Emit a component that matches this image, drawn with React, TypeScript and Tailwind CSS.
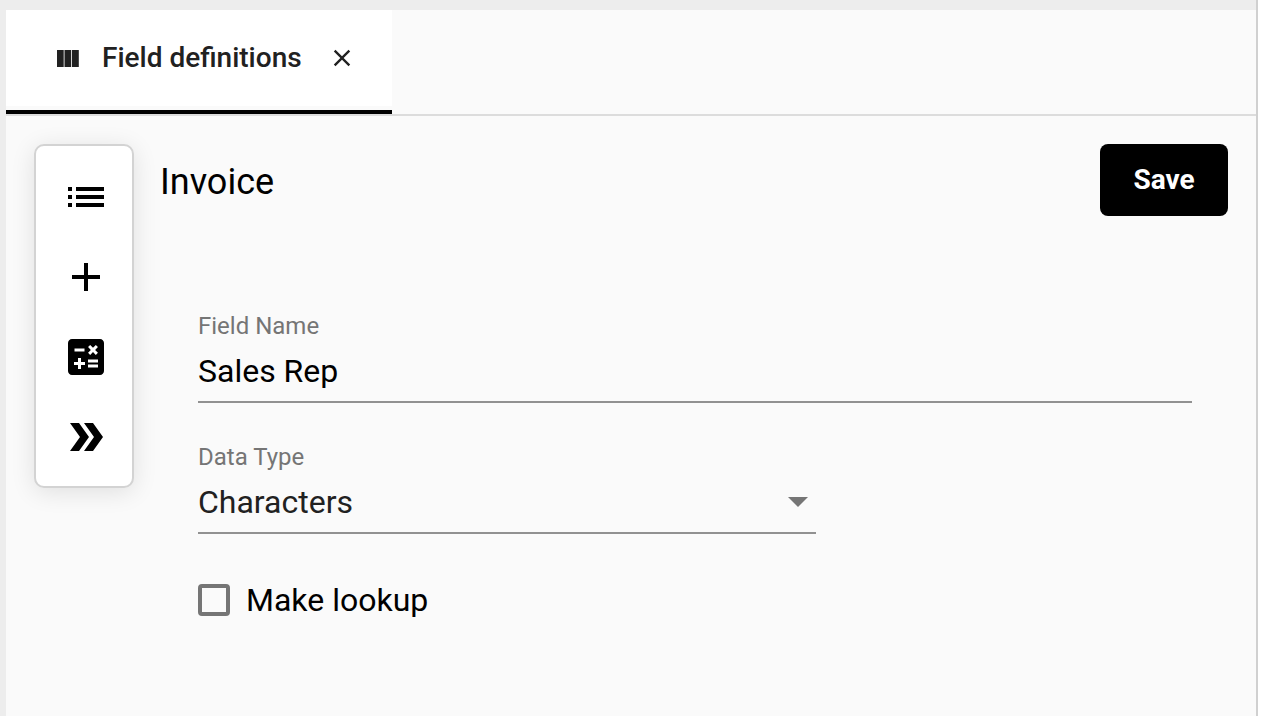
import { useState, type ReactNode } from "react";
import { MdList, MdAdd, MdCalculate, MdDoubleArrow, MdClose } from "react-icons/md";

function ColumnsIcon() {
  return (
    <svg viewBox="0 0 22 17" className="h-[17px] w-[22px]" fill="currentColor" aria-hidden="true">
      <path d="M0 0h6.7v17H0zM7.5 0h6.7v17H7.5zM15 0h6.8v17H15z" />
    </svg>
  );
}

function ToolButton({ label, children }: { label: string; children: ReactNode }) {
  return (
    <button type="button" aria-label={label} className="flex h-20 w-full items-center justify-center pl-1 text-[48px] text-black">
      {children}
    </button>
  );
}

export default function App() {
  const [name, setName] = useState("Sales Rep");
  const [dataType, setDataType] = useState("Characters");
  const [lookup, setLookup] = useState(false);

  return (
    <div className="flex min-h-screen bg-white pr-3 font-['Roboto',sans-serif] text-[#212121]">
      <div className="flex flex-1 flex-col border-r-2 border-[#d0d0d0] bg-[#ededed] pt-[10px] pl-[6px]">
        <header className="flex bg-[#fafafa] shadow-[inset_0_-2px_0_#dcdcdc]">
          <div className="mb-[2px] border-b-4 border-black bg-[#fafafa] pb-1">
            <div className="flex h-24 items-center bg-white pr-9 pl-[51px]">
              <ColumnsIcon />
              <span className="ml-[23px] text-[28px] leading-8 font-medium whitespace-nowrap">Field definitions</span>
              <button type="button" aria-label="Close tab" className="ml-[26px] text-[28px]">
                <MdClose />
              </button>
            </div>
          </div>
        </header>
        <main className="flex flex-1 items-start gap-[26px] bg-[#fafafa] p-7">
          <nav aria-label="Field tools" className="w-25 shrink-0 rounded-[10px] border-2 border-[#d3d3d3] bg-white pt-[11px] pb-[9px] shadow-[0_4px_24px_rgba(0,0,0,0.11)]">
            <ToolButton label="List"><MdList /></ToolButton>
            <ToolButton label="Add"><MdAdd /></ToolButton>
            <ToolButton label="Calculate"><MdCalculate /></ToolButton>
            <ToolButton label="Expand"><MdDoubleArrow /></ToolButton>
          </nav>
          <section className="min-w-0 flex-1">
            <div className="flex items-start justify-between">
              <h1 className="pt-4 text-[36px] leading-[44px] text-black">Invoice</h1>
              <button type="button" className="h-18 w-32 rounded-lg bg-black text-[28px] leading-8 font-bold text-white">
                Save
              </button>
            </div>
            <form className="flex flex-col pt-24 pr-9 pl-[38px]">
              <label htmlFor="field-name" className="text-[24px] leading-7 text-[#757575]">Field Name</label>
              <input
                id="field-name"
                value={name}
                onChange={(e) => setName(e.target.value)}
                className="mt-2 h-[55px] w-full border-b-2 border-[#919191] pb-[8px] text-[32px] leading-10 text-black outline-none"
              />
              <label htmlFor="data-type" className="mt-10 text-[24px] leading-7 text-[#757575]">Data Type</label>
              <div className="relative mt-2 w-[618px] max-w-full">
                <select
                  id="data-type"
                  value={dataType}
                  onChange={(e) => setDataType(e.target.value)}
                  className="h-[55px] w-full appearance-none border-b-2 border-[#919191] pb-[8px] text-[32px] leading-10 outline-none"
                >
                  <option>Characters</option>
                  <option>Number</option>
                  <option>Date</option>
                </select>
                <svg viewBox="0 0 20 10" className="pointer-events-none absolute top-[18px] right-2 h-[10px] w-5" fill="#757575" aria-hidden="true">
                  <path d="M0 0h20L10 10z" />
                </svg>
              </div>
              <label className="mt-[46px] flex items-center gap-4 self-start text-[32px] leading-10 text-black">
                <input
                  type="checkbox"
                  checked={lookup}
                  onChange={(e) => setLookup(e.target.checked)}
                  className="size-8 appearance-none rounded-[4px] border-4 border-[#757575] checked:bg-[#757575]"
                />
                Make lookup
              </label>
            </form>
          </section>
        </main>
      </div>
    </div>
  );
}
